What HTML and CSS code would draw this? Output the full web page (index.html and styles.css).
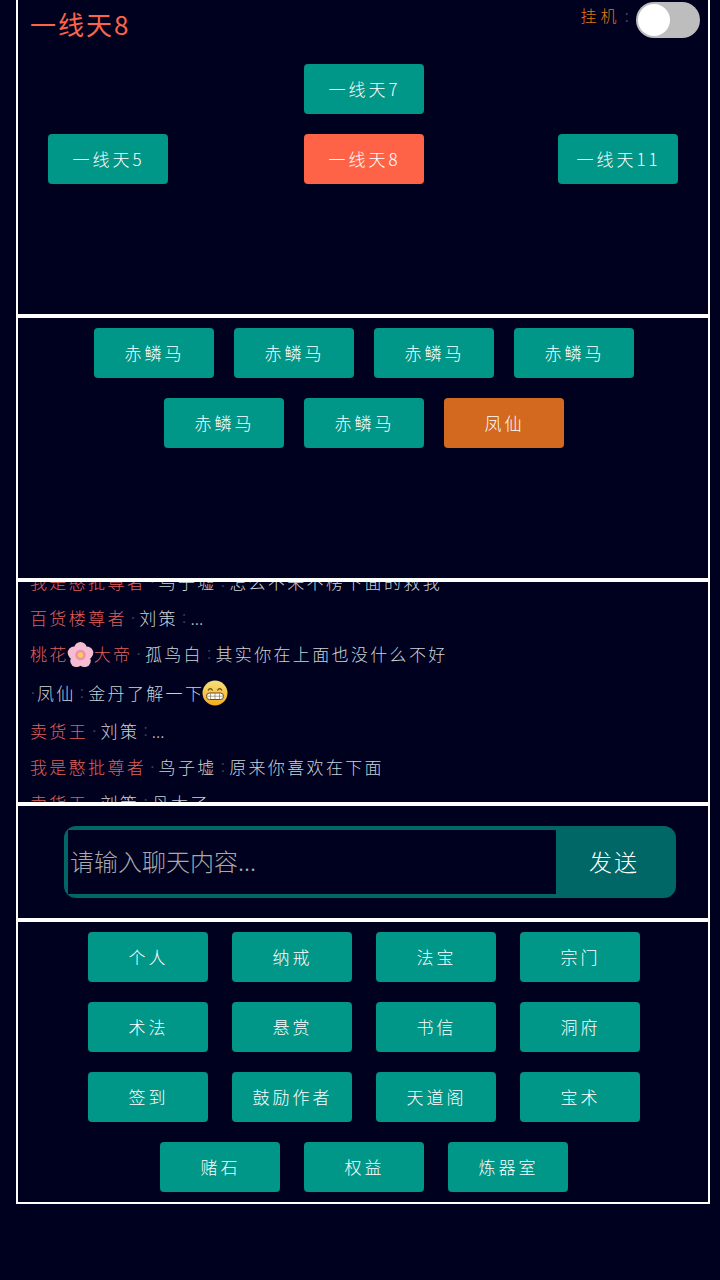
FILE: index.html
```html
<!DOCTYPE html>
<html lang="zh">
<head>
<meta charset="utf-8">
<title>一线天8</title>
<link rel="stylesheet" href="styles.css">
</head>
<body>
<main class="frame">
  <section class="panel map">
    <header class="topbar">
      <h1 class="place">一线天8</h1>
      <div class="idle"><span class="idle-label">挂机<span class="idle-colon">:</span></span><span class="toggle"><span class="knob"></span></span></div>
    </header>
    <div class="map-row center"><button class="btn">一线天7</button></div>
    <div class="map-row">
      <button class="btn">一线天5</button>
      <button class="btn current gap-a">一线天8</button>
      <button class="btn gap-b">一线天11</button>
    </div>
  </section>
  <section class="panel people">
    <div class="btn-row"><button class="btn">赤鳞马</button><button class="btn">赤鳞马</button><button class="btn">赤鳞马</button><button class="btn">赤鳞马</button></div>
    <div class="btn-row"><button class="btn">赤鳞马</button><button class="btn">赤鳞马</button><button class="btn npc">凤仙</button></div>
  </section>
  <section class="panel chat">
    <div class="chat-scroll">
      <p class="msg"><span class="title">我是憨批尊者</span><span class="dot">·</span>鸟子墟<span class="dot">:</span>怎么不来不榜下面的救我</p>
      <p class="msg"><span class="title">百货楼尊者</span><span class="dot">·</span>刘策<span class="dot">:</span><span class="dots">...</span></p>
      <p class="msg"><span class="title">桃花<svg class="emoji flower" viewBox="0 0 28 28"><g fill="#f6bcd2"><circle cx="14" cy="7.500" r="6.500"/><circle cx="20.800" cy="12.300" r="6.500"/><circle cx="18.200" cy="20.500" r="6.500"/><circle cx="9.800" cy="20.500" r="6.500"/><circle cx="7.200" cy="12.300" r="6.500"/></g><circle cx="14" cy="14.500" r="5.500" fill="#f08fb4"/><circle cx="14" cy="14.500" r="2.800" fill="#f6cf4e"/></svg>大帝</span><span class="dot">·</span>孤鸟白<span class="dot">:</span>其实你在上面也没什么不好</p>
      <p class="msg tall"><span class="dot lead">·</span>凤仙<span class="dot">:</span>金丹了解一下<svg class="emoji face" viewBox="0 0 26 26"><defs><linearGradient id="faceFill" x1="0" y1="0" x2="0" y2="1"><stop offset="0" stop-color="#f8e07a"/><stop offset="1" stop-color="#f3ae1d"/></linearGradient></defs><circle cx="13" cy="13" r="12.500" fill="url(#faceFill)"/><path d="M6 10.500q2.300-3.600 4.600 0M15.400 10.500q2.300-3.600 4.600 0" fill="none" stroke="#6b4a1e" stroke-width="1.300"/><rect x="4.500" y="13" width="17" height="6.500" rx="3" fill="#fff" stroke="#6b4a1e" stroke-width="1"/><path d="M4.500 16.200h17M8.500 13v6.500M13 13v6.500M17.500 13v6.500" stroke="#8a7a5c" stroke-width=".7"/></svg></p>
      <p class="msg"><span class="title">卖货王</span><span class="dot">·</span>刘策<span class="dot">:</span><span class="dots">...</span></p>
      <p class="msg"><span class="title">我是憨批尊者</span><span class="dot">·</span>鸟子墟<span class="dot">:</span>原来你喜欢在下面</p>
      <p class="msg"><span class="title">卖货王</span><span class="dot">·</span>刘策<span class="dot">:</span>丹太了</p>
    </div>
  </section>
  <section class="panel composer">
    <form class="send-box">
      <input class="chat-input" placeholder="请输入聊天内容..." aria-label="聊天内容">
      <button class="send" type="button">发送</button>
    </form>
  </section>
  <nav class="panel menu">
    <div class="btn-row"><button class="btn">个人</button><button class="btn">纳戒</button><button class="btn">法宝</button><button class="btn">宗门</button></div>
    <div class="btn-row"><button class="btn">术法</button><button class="btn">悬赏</button><button class="btn">书信</button><button class="btn">洞府</button></div>
    <div class="btn-row"><button class="btn">签到</button><button class="btn">鼓励作者</button><button class="btn">天道阁</button><button class="btn">宝术</button></div>
    <div class="btn-row"><button class="btn">赌石</button><button class="btn">权益</button><button class="btn">炼器室</button></div>
  </nav>
</main>
</body>
</html>
```
FILE: styles.css
```css
* { box-sizing: border-box; }
html, body { height: 100%; }
body {
  margin: 0;
  height: 1280px;
  overflow: hidden;
  background: #00001f;
  font-family: "Noto Sans CJK SC", "Noto Sans", sans-serif;
  font-weight: 300;
}
.frame {
  width: 694px;
  height: 1204px;
  margin-left: 16px;
  border: 2px solid #fff;
  border-top: 0;
  display: flex;
  flex-direction: column;
}
.panel { flex: none; }
.panel + .panel { border-top: 4px solid #fff; }
.map { height: 314px; }
.people { height: 264px; padding-top: 10px; }
.chat { height: 224px; overflow: hidden; }
.composer { height: 116px; padding: 20px 32px 0 46px; }
.menu { flex: 1; padding-top: 10px; }

.topbar { height: 64px; display: flex; justify-content: space-between; padding: 0 8px 0 12px; }
.place { margin: 6px 0 0; font-size: 26px; line-height: 36px; font-weight: 400; color: #ff6347; letter-spacing: 2px; }
.idle { display: flex; align-items: flex-start; padding-top: 2px; }
.idle-label { font-size: 16px; line-height: 26px; color: #e07b12; letter-spacing: 4px; margin-right: 3px; }
.idle-colon { color: #4c4f63; margin-left: 4px; font-family: "Liberation Sans", sans-serif; }
.toggle { width: 64px; height: 36px; border-radius: 18px; background: #bdbdbd; padding: 2px; }
.knob { display: block; width: 32px; height: 32px; border-radius: 50%; background: #fff; }

.btn {
  width: 120px;
  height: 50px;
  padding: 0;
  border: 0;
  border-radius: 4px;
  background: #009688;
  color: #fff;
  font: 300 17px/48px "Noto Sans CJK SC", sans-serif;
  letter-spacing: 3px;
  text-indent: 1px;
  flex: none;
}
.current { background: #ff6347; }
.npc { background: #d2691e; }

.map-row { display: flex; padding-left: 30px; margin-bottom: 20px; }
.map-row.center { padding-left: 286px; }
.gap-a { margin-left: 136px; }
.gap-b { margin-left: 134px; }

.btn-row { display: flex; justify-content: center; gap: 20px; margin-bottom: 20px; padding-left: 2px; }
.menu .btn-row { gap: 24px; }

.chat-scroll { margin-top: -18px; padding-left: 12px; }
.msg { margin: 0; height: 36px; font-size: 17px; line-height: 36px; letter-spacing: 2.35px; color: #c9d2d6; white-space: nowrap; display: flex; align-items: center; }
.msg.tall { height: 41px; }
.title { color: #e0605a; display: inline-flex; align-items: center; }
.dot { color: #3b4258; width: 12.500px; text-align: center; flex: none; font-family: "Liberation Sans", sans-serif; letter-spacing: 0; }
.dot.lead { width: 7px; text-align: left; }
.dots { letter-spacing: 0; }
.emoji { flex: none; display: inline-block; }
.flower { width: 27px; height: 27px; margin-left: -2px; }
.face { width: 26px; height: 26px; margin-left: -2px; }

.send-box { display: flex; width: 612px; height: 72px; border: 4px solid #006666; border-radius: 12px; background: #006666; }
.chat-input {
  flex: 1;
  min-width: 0;
  border: 0;
  outline: 0;
  padding: 0 2px 4px;
  background: #00001f;
  color: #fff;
  font: 300 24px "Noto Sans CJK SC", sans-serif;
}
.chat-input::placeholder { color: #a9a9a9; opacity: 1; }
.send { width: 116px; border: 0; background: #006666; color: #fff; font: 300 23px "Noto Sans CJK SC", sans-serif; letter-spacing: 2px; text-indent: 0; padding: 0 0 2px; }
```
